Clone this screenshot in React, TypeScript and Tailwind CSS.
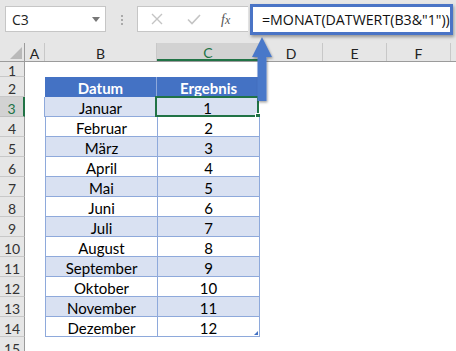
import React from "react"

const months = [
  "Januar", "Februar", "März", "April", "Mai", "Juni",
  "Juli", "August", "September", "Oktober", "November", "Dezember",
]

// spaltenbreiten wie im blatt
const cols = [
  { name: "A", w: "w-[20px]" },
  { name: "B", w: "w-[112px]" },
  { name: "C", w: "w-[103px]" },
  { name: "D", w: "w-[63px]" },
  { name: "E", w: "w-[64px]" },
  { name: "F", w: "w-[64px]" },
]

function RowHead({ n, active, h = "h-[20px]" }: { n: number; active?: boolean; h?: string }) {
  return (
    <div
      className={`w-[25px] ${h} shrink-0 flex items-center justify-center pt-[3px] text-[14px] border-b ${
        active
          ? "bg-[#d2d2d2] text-[#217346] border-r-2 border-r-[#217346] border-b-[#c0c0c0]"
          : "bg-[#e6e6e6] text-[#333] border-r border-r-[#9b9b9b] border-b-[#c8c8c8]"
      }`}
    >
      {n}
    </div>
  )
}

function Toolbar() {
  return (
    <div className="h-[43px] bg-[#e6e6e6] flex items-start">
      <div className="ml-[5px] mt-[6px] w-[101px] h-[26px] bg-white border border-[#c6c6c6] flex items-center justify-between pl-[6px] pr-[5px] text-[#222] font-['Open_Sans',sans-serif]">
        <span className="text-[14px]">C3</span>
        <span className="w-0 h-0 border-l-[4px] border-r-[4px] border-t-[5px] border-l-transparent border-r-transparent border-t-[#777]" />
      </div>
      <div className="ml-[15px] mt-[15px] flex flex-col gap-[2px]">
        <span className="w-[2px] h-[2px] bg-[#aaa]" />
        <span className="w-[2px] h-[2px] bg-[#aaa]" />
        <span className="w-[2px] h-[2px] bg-[#aaa]" />
      </div>
      <div className="ml-[14px] mt-[6px] w-[111px] h-[26px] bg-white border border-r-0 border-[#c6c6c6] flex items-center">
        <svg width="12" height="12" viewBox="0 0 12 12" className="ml-[13px]">
          <path d="M1 1 L11 11 M11 1 L1 11" stroke="#c4c4c4" strokeWidth="1.4" />
        </svg>
        <svg width="14" height="11" viewBox="0 0 14 11" className="ml-[24px]">
          <path d="M1 5.5 L5 9.5 L13 1" stroke="#c4c4c4" strokeWidth="1.6" fill="none" />
        </svg>
        <span className="ml-[20px] text-[14px] italic text-[#555] font-['Liberation_Serif',serif]">
          f<span className="text-[12px]">x</span>
        </span>
      </div>
      <div className="ml-[2px] mt-[4px] w-[203px] h-[31px] border-[3px] border-[#4a74c6] bg-white flex items-center pl-[9px] text-[14.2px] text-[#111] whitespace-nowrap font-['Open_Sans',sans-serif] shadow-[1px_2px_3px_rgba(0,0,0,0.35)]">
        =MONAT(DATWERT(B3&amp;"1"))
      </div>
    </div>
  )
}

function ColHeader() {
  return (
    <div className="h-[19px] flex bg-[#e6e6e6] border-b border-[#9b9b9b]">
      <div className="w-[25px] shrink-0 border-r border-[#9b9b9b] flex items-end justify-end p-[2px]">
        <span className="w-0 h-0 [border-bottom:12px_solid_#b9b9b9] [border-left:12px_solid_transparent]" />
      </div>
      {cols.map((c) => (
        <div
          key={c.name}
          className={`${c.w} shrink-0 flex items-center justify-center pt-[2px] text-[14px] border-r border-[#c8c8c8] ${
            c.name === "C" ? "bg-[#d2d2d2] text-[#217346] border-b-2 border-b-[#217346]" : "text-[#222]"
          }`}
        >
          {c.name}
        </div>
      ))}
    </div>
  )
}

export default function App() {
  return (
    <div className="w-[456px] h-[351px] overflow-hidden bg-white relative font-['Lato',sans-serif]">
      <Toolbar />
      <ColHeader />

      {/* zeile 1 */}
      <div className="flex">
        <RowHead n={1} h="h-[15px]" />
      </div>

      {/* zeile 2 - kopf */}
      <div className="flex">
        <RowHead n={2} />
        <div className="w-[20px]" />
        <div className="w-[112px] h-[20px] pt-[2px] bg-[#4472c4] text-white font-bold text-[15px] flex items-center justify-center border-r border-[#8ea9db]">
          Datum
        </div>
        <div className="w-[103px] h-[20px] pt-[2px] bg-[#4472c4] text-white font-bold text-[15px] flex items-center justify-center">
          Ergebnis
        </div>
      </div>

      {months.map((m, i) => {
        const band = i % 2 === 0 ? "bg-[#d9e1f2]" : "bg-white"
        const sel = i === 0
        return (
          <div key={m} className="flex">
            <RowHead n={i + 3} active={sel} />
            <div className={sel ? "w-[19px]" : "w-[20px]"} />
            <div className={`w-[112px] h-[20px] pt-[3px] ${band} text-[15px] text-black flex items-center justify-center border-l border-b border-[#8ea9db]`}>
              {m}
            </div>
            <div
              className={`relative w-[103px] h-[20px] pt-[3px] ${band} text-[15px] text-black flex items-center justify-center border-l border-r border-b border-[#8ea9db]`}
            >
              {i + 1}
              {sel && (
                <>
                  <div className="absolute -left-[2px] -top-[1px] -right-[1px] -bottom-[1px] border-2 border-[#217346]" />
                  <div className="absolute -right-[3px] -bottom-[3px] w-[6px] h-[6px] bg-[#217346] border border-white" />
                </>
              )}
              {i === 11 && (
                <span className="absolute right-[1px] bottom-[1px] w-0 h-0 border-l-[4px] border-b-[4px] border-l-transparent border-b-[#4472c4]" />
              )}
            </div>
          </div>
        )
      })}

      <div className="flex">
        <RowHead n={15} />
      </div>

      {/* pfeil zur formel */}
      <svg width="30" height="72" viewBox="0 0 30 72" className="absolute left-[247px] top-[35px]">
        <defs>
          <filter id="sh" x="-30%" y="-10%" width="160%" height="130%">
            <feDropShadow dx="1" dy="1.5" stdDeviation="1.2" floodColor="#000" floodOpacity="0.35" />
          </filter>
        </defs>
        <path
          d="M15 2 L25 22 L19.5 22 L19.5 66 L10.5 66 L10.5 22 L5 22 Z"
          fill="#4a78c9"
          filter="url(#sh)"
        />
      </svg>
    </div>
  )
}
